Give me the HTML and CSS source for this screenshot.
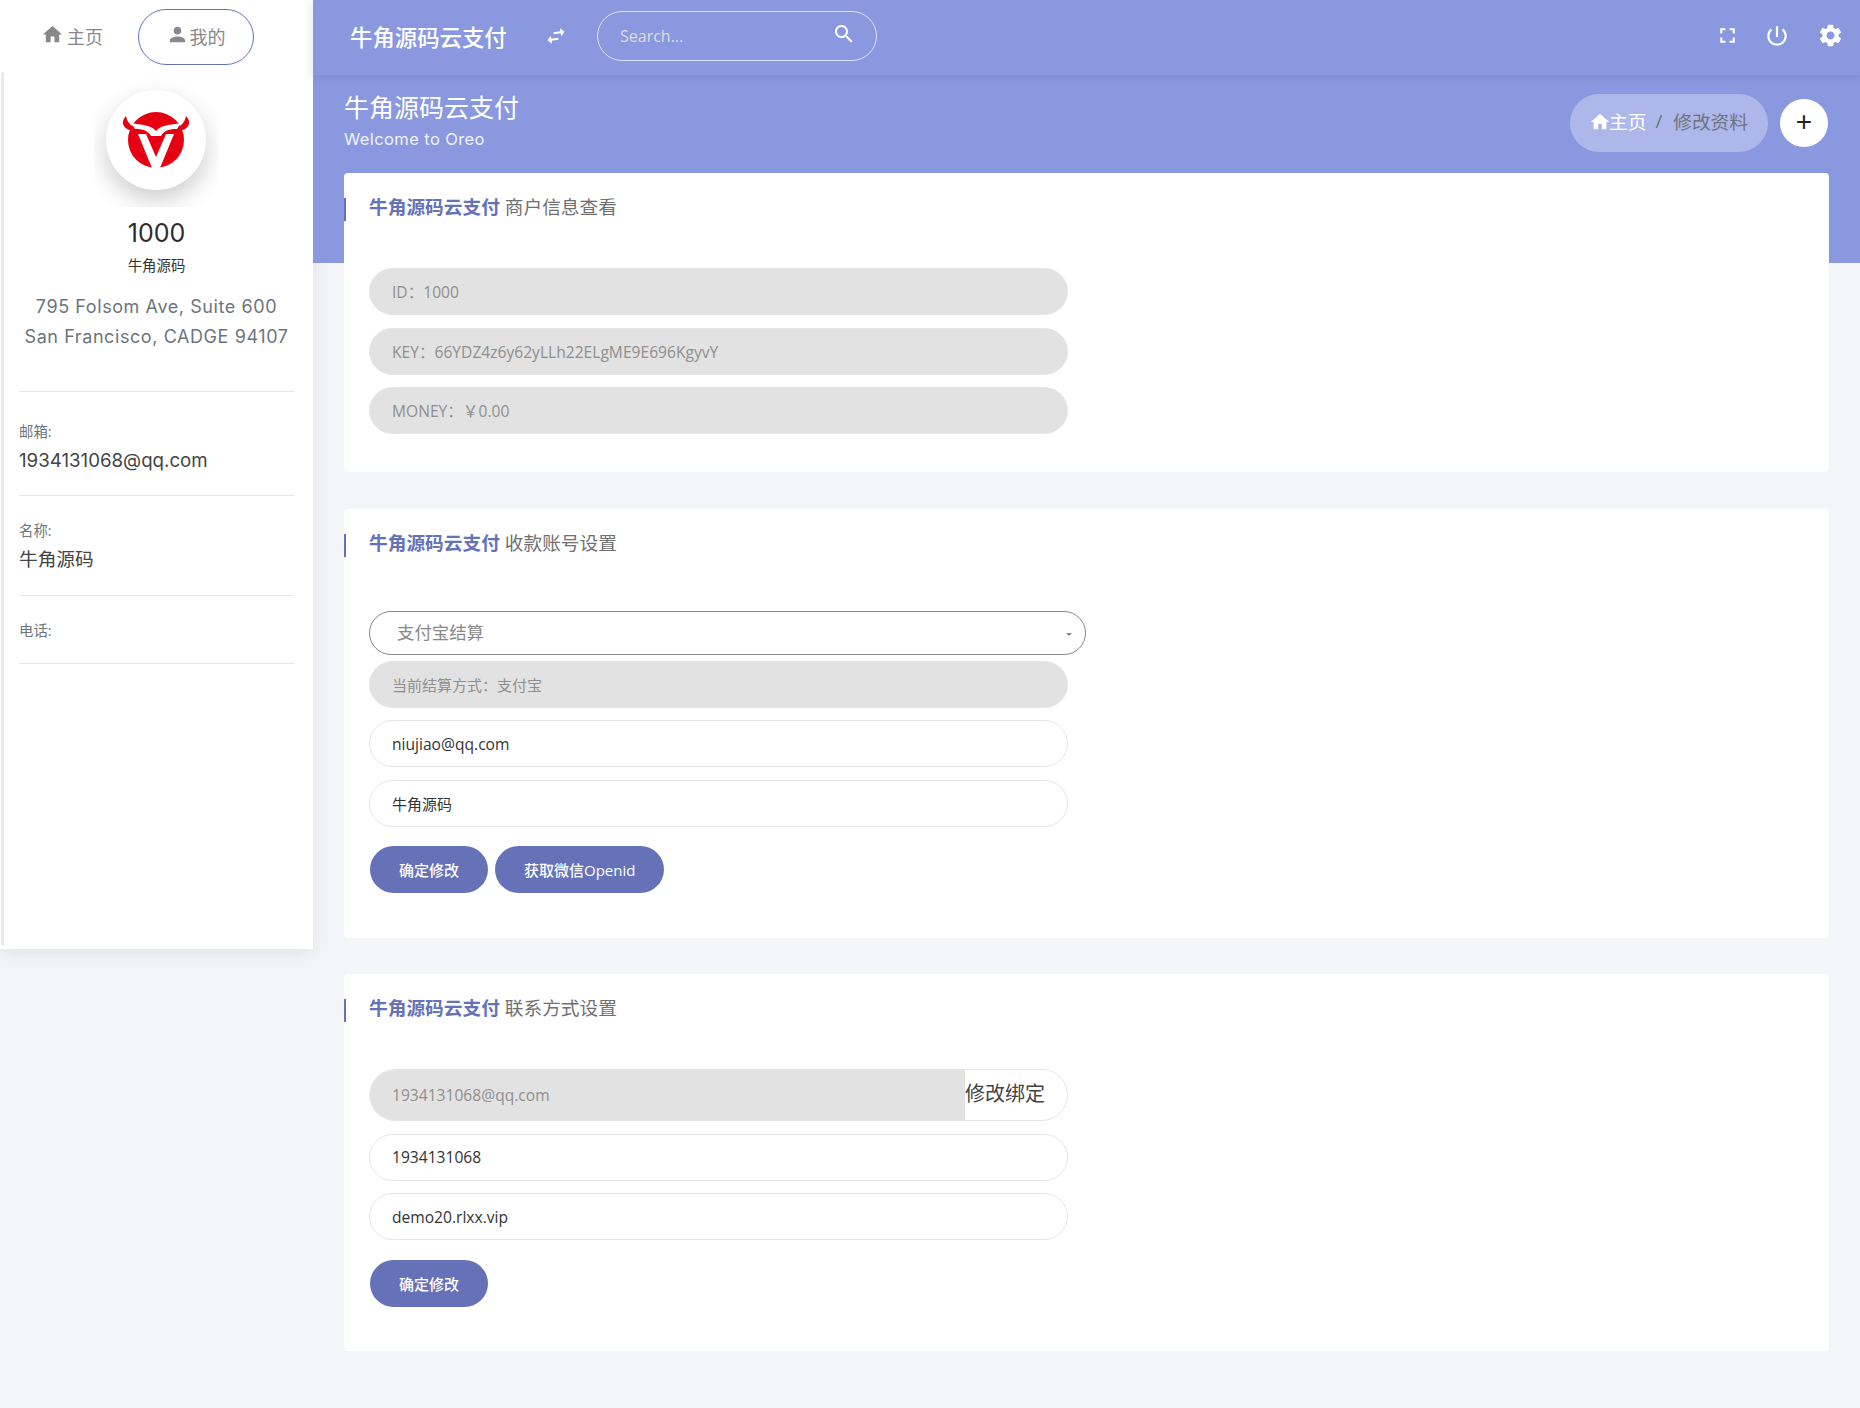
FILE: index.html
```html
<!DOCTYPE html>
<html lang="zh-CN">
<head>
  <meta charset="UTF-8" />
  <title>牛角源码云支付</title>
  <link rel="stylesheet" href="styles.css">
</head>
<body>
  <aside class="sidebar">
    <nav class="tabs">
      <a class="tab">
        <svg class="tab-icon" viewBox="0 0 24 24"><path d="M10 20v-6h4v6h5v-8h3L12 3 2 12h3v8z"/></svg>主页
      </a>
      <a class="tab active">
        <svg class="tab-icon" viewBox="0 0 24 24"><path d="M12 12c2.21 0 4-1.79 4-4s-1.79-4-4-4-4 1.79-4 4 1.79 4 4 4zm0 2c-2.67 0-8 1.34-8 4v2h16v-2c0-2.66-5.33-4-8-4z"/></svg>我的
      </a>
    </nav>
    <div class="profile">
      <div class="avatar-box">
        <div class="avatar">
          <svg viewBox="0 0 100 100" width="100" height="100">
            <circle cx="50" cy="50" r="28" fill="#e60012"/>
            <path d="M20 26C15 31 16 37 23 40L31 39C25 36 21 32 20 26Z" fill="#e60012"/>
            <path d="M80 26C85 31 84 37 77 40L69 39C75 36 79 32 80 26Z" fill="#e60012"/>
            <path d="M25 33C36 35 45 35 50 41C55 35 64 35 75 33L71 39C64 39 58 40 55 46L45 46C42 40 36 39 29 39Z" fill="#fff"/>
            <path d="M32 44H40L50 67L60 44H68L54 78H46Z" fill="#fff"/>
          </svg>
        </div>
      </div>
      <div class="profile-id">1000</div>
      <div class="profile-name">牛角源码</div>
      <p class="address">795 Folsom Ave, Suite 600<br>San Francisco, CADGE 94107</p>
      <div class="info-row first">
        <small>邮箱:</small>
        <p>1934131068@qq.com</p>
      </div>
      <div class="info-row">
        <small>名称:</small>
        <p>牛角源码</p>
      </div>
      <div class="info-row">
        <small>电话:</small>
        <p></p>
      </div>
    </div>
  </aside>

  <div class="main">
    <header class="topbar">
      <div class="brand">牛角源码云支付</div>
      <svg class="swap" viewBox="0 0 24 24"><path d="M6.99 11L3 15l3.99 4v-3H14v-2H6.99v-3zM21 9l-3.99-4v3H10v2h7.01v3L21 9z"/></svg>
      <div class="search">
        <input type="text" placeholder="Search...">
        <svg viewBox="0 0 24 24"><path d="M15.5 14h-.79l-.28-.27C15.41 12.59 16 11.11 16 9.5 16 5.91 13.09 3 9.5 3S3 5.91 3 9.5 5.91 16 9.5 16c1.61 0 3.09-.59 4.23-1.57l.27.28v.79l5 4.99L20.49 19l-4.99-5zm-6 0C7.01 14 5 11.99 5 9.5S7.01 5 9.5 5 14 7.01 14 9.5 11.99 14 9.5 14z"/></svg>
      </div>
      <div class="top-icons">
        <svg class="icon-full" viewBox="0 0 24 24"><path d="M7 14H5v5h5v-2H7v-3zm-2-4h2V7h3V5H5v5zm12 7h-3v2h5v-5h-2v3zM14 5v2h3v3h2V5h-5z"/></svg>
        <svg class="icon-power" viewBox="0 0 24 24"><path d="M13 3h-2v10h2V3zm4.83 2.17l-1.42 1.42C17.99 7.86 19 9.81 19 12c0 3.87-3.13 7-7 7s-7-3.13-7-7c0-2.19 1.01-4.14 2.58-5.42L6.17 5.17C4.23 6.82 3 9.26 3 12c0 4.97 4.03 9 9 9s9-4.03 9-9c0-2.74-1.23-5.18-3.17-6.83z"/></svg>
        <svg class="icon-gear" viewBox="0 0 24 24"><path d="M19.14 12.94c.04-.3.06-.61.06-.94 0-.32-.02-.64-.07-.94l2.03-1.58a.49.49 0 0 0 .12-.61l-1.92-3.32a.488.488 0 0 0-.59-.22l-2.39.96c-.5-.38-1.03-.7-1.62-.94l-.36-2.54a.484.484 0 0 0-.48-.41h-3.84c-.24 0-.43.17-.47.41l-.36 2.54c-.59.24-1.13.57-1.62.94l-2.39-.96c-.22-.08-.47 0-.59.22L2.74 8.87c-.12.21-.08.47.12.61l2.03 1.58c-.05.3-.09.63-.09.94s.02.64.07.94l-2.03 1.58a.49.49 0 0 0-.12.61l1.92 3.32c.12.22.37.29.59.22l2.39-.96c.5.38 1.03.7 1.62.94l.36 2.54c.05.24.24.41.48.41h3.84c.24 0 .44-.17.47-.41l.36-2.54c.59-.24 1.13-.56 1.62-.94l2.39.96c.22.08.47 0 .59-.22l1.92-3.32c.12-.22.07-.47-.12-.61l-2.01-1.58zM12 15.6c-1.98 0-3.6-1.62-3.6-3.6s1.62-3.6 3.6-3.6 3.6 1.62 3.6 3.6-1.62 3.6-3.6 3.6z"/></svg>
      </div>
    </header>

    <section class="hero">
      <div class="hero-title">
        <h1>牛角源码云支付</h1>
        <span>Welcome to Oreo</span>
      </div>
      <div class="hero-actions">
        <div class="crumbs">
          <a class="crumb-home"><svg viewBox="0 0 24 24"><path d="M10 20v-6h4v6h5v-8h3L12 3 2 12h3v8z"/></svg>主页</a>
          <span class="crumb-sep">/</span>
          <span>修改资料</span>
        </div>
        <button class="add-btn">+</button>
      </div>
    </section>

    <div class="content">
      <section class="card card-short">
        <h2 class="card-title"><span><strong>牛角源码云支付</strong> 商户信息查看</span></h2>
        <div class="form">
          <input class="field" type="text" value="ID：1000" disabled>
          <input class="field" type="text" value="KEY：66YDZ4z6y62yLLh22ELgME9E696KgyvY" disabled>
          <input class="field" type="text" value="MONEY：￥0.00" disabled>
        </div>
      </section>

      <section class="card">
        <h2 class="card-title"><span><strong>牛角源码云支付</strong> 收款账号设置</span></h2>
        <div class="form">
          <div class="select-wrap">
            <select>
              <option>支付宝结算</option>
            </select>
          </div>
          <input class="field cn" type="text" value="当前结算方式：支付宝" disabled>
          <input class="field" type="text" value="niujiao@qq.com">
          <input class="field cn" type="text" value="牛角源码">
          <div class="btn-row">
            <button class="btn">确定修改</button>
            <button class="btn">获取微信Openid</button>
          </div>
        </div>
      </section>

      <section class="card">
        <h2 class="card-title"><span><strong>牛角源码云支付</strong> 联系方式设置</span></h2>
        <div class="form">
          <div class="input-group">
            <input type="text" value="1934131068@qq.com" disabled>
            <span class="append">修改绑定</span>
          </div>
          <input class="field" type="text" value="1934131068">
          <input class="field" type="text" value="demo20.rlxx.vip">
          <div class="btn-row">
            <button class="btn">确定修改</button>
          </div>
        </div>
      </section>
    </div>
  </div>
</body>
</html>
```

FILE: styles.css
```css
* {
  box-sizing: border-box;
}
body {
  margin: 0;
  min-height: 1408px;
  display: flex;
  align-items: flex-start;
  background: #f4f5f9;
  font-family: "Open Sans", "Noto Sans CJK SC", sans-serif;
  color: #333;
}
h1, h2, p {
  margin: 0;
  font-weight: normal;
}
svg {
  fill: currentColor;
  display: block;
  flex-shrink: 0;
}

/* sidebar */
.sidebar {
  width: 313px;
  height: 949px;
  flex-shrink: 0;
  display: flex;
  flex-direction: column;
  background: #fff;
  box-shadow: 0 5px 18px rgba(0,0,0,0.08);
}
.tabs {
  height: 72px;
  padding: 9px 0 0 41px;
  display: flex;
  gap: 34.5px;
  align-items: flex-start;
}
.tab {
  height: 56px;
  display: flex;
  align-items: center;
  padding-bottom: 2px;
  font-size: 18px;
  color: #888;
}
.tab-icon {
  width: 23px;
  height: 23px;
  margin-right: 3px;
  margin-top: -3px;
}
.tab.active {
  width: 116px;
  justify-content: center;
  border: 1px solid #6572b8;
  border-radius: 28px;
}
.tab.active .tab-icon {
  margin-right: 1px;
}
.profile {
  flex: 1;
  margin: 0 0 3px 1px;
  padding: 0 19px 0 15px;
  border-left: 3px solid #e9e9e9;
  border-radius: 3px;
  text-align: center;
}
.avatar-box {
  width: 125px;
  height: 135px;
  margin: 0 auto;
  padding-top: 18px;
  overflow: hidden;
}
.avatar {
  width: 100px;
  height: 100px;
  margin-left: 12px;
  border-radius: 50%;
  background: #fff;
  box-shadow: 0 10px 25px rgba(0,0,0,0.2);
}
.profile-id {
  margin-top: 10px;
  font-family: Inter, sans-serif;
  font-size: 25px;
  line-height: 32px;
  color: #2d2d2d;
}
.profile-name {
  margin-top: 6px;
  font-size: 14.4px;
  line-height: 22px;
  color: #333;
}
.address {
  margin-top: 15px;
  padding-bottom: 39px;
  font-family: Inter, sans-serif;
  font-size: 18px;
  letter-spacing: 0.58px;
  line-height: 30px;
  color: #6c757d;
  white-space: nowrap;
}
.info-row {
  border-top: 1px solid #e6e6e6;
  text-align: left;
  padding-top: 24px;
  height: 100px;
}
.info-row:last-child {
  height: 69px;
  border-bottom: 1px solid #e6e6e6;
}
.info-row.first {
  height: 104px;
  padding-top: 29px;
}
.info-row small {
  display: block;
  font-size: 14.4px;
  line-height: 22px;
  color: #6c757d;
}
.info-row p {
  margin-top: 4px;
  font-family: Inter, "Noto Sans CJK SC", sans-serif;
  font-size: 18.7px;
  line-height: 28px;
  color: #444;
}

/* top bar */
.main {
  flex: 1;
  min-width: 0;
}
.topbar {
  height: 75px;
  padding-left: 37px;
  display: flex;
  align-items: center;
  background: #8a98e0;
  color: #fff;
  box-shadow: 0 2px 10px rgba(0,0,0,0.1);
  position: relative;
}
.brand {
  font-size: 22.4px;
  font-weight: 500;
  width: 194px;
  margin-bottom: 2px;
}
.swap {
  width: 24px;
  height: 24px;
  margin-bottom: 3px;
  transform: rotate(-8deg);
}
.search {
  width: 280px;
  height: 50px;
  margin: 0 0 4px 29px;
  padding: 0 20px 0 22px;
  display: flex;
  align-items: center;
  border: 1px solid rgba(255,255,255,0.7);
  border-radius: 25px;
}
.search input {
  flex: 1;
  min-width: 0;
  border: 0;
  outline: 0;
  padding: 0;
  background: transparent;
  font: 16px "Open Sans", sans-serif;
  color: #fff;
}
.search input::placeholder {
  color: #dcdcdc;
  opacity: 1;
}
.search svg {
  width: 24px;
  height: 24px;
  margin-top: -3px;
}
.top-icons {
  margin: 0 0 4px auto;
  padding-right: 16px;
  display: flex;
  align-items: center;
}
.icon-full {
  width: 25px;
  height: 25px;
  margin-right: 24px;
}
.icon-power {
  width: 26px;
  height: 26px;
  margin-right: 27px;
}
.icon-gear {
  width: 27px;
  height: 27px;
}

/* hero band */
.hero {
  height: 188px;
  padding: 16px 31px 0;
  display: flex;
  justify-content: space-between;
  align-items: flex-start;
  background: #8a98e0;
  color: #fff;
}
.hero-title h1 {
  font-size: 25px;
  line-height: 32px;
}
.hero-title span {
  display: block;
  margin-top: 5px;
  font-family: Inter, sans-serif;
  font-size: 16.5px;
  letter-spacing: 0.4px;
  line-height: 22px;
  color: #f0f1fb;
}
.hero-actions {
  display: flex;
  align-items: center;
  gap: 12px;
  margin-right: 1px;
  padding-top: 3px;
}
.crumbs {
  width: 198px;
  height: 58px;
  padding: 0 0 6px 20px;
  display: flex;
  align-items: center;
  border-radius: 29px;
  background: #aeb7ea;
  font-size: 18.7px;
  color: #6c757d;
}
.crumb-home {
  display: flex;
  align-items: center;
  color: #fff;
}
.crumb-home svg {
  width: 22px;
  height: 22px;
  margin: 3px -2px 0 -1px;
}
.crumb-sep {
  margin: 0 11px 0 9px;
}
.add-btn {
  width: 48px;
  height: 48px;
  padding: 0 0 3px;
  border: 0;
  border-radius: 50%;
  background: #fff;
  font: 28px "Liberation Sans", sans-serif;
  color: #222;
}

/* cards */
.content {
  margin-top: -90px;
  padding: 0 31px;
}
.card {
  margin-bottom: 36.5px;
  padding: 0 25px 44.5px;
  background: #fff;
  border-radius: 4px;
}
.card-short {
  padding-bottom: 25.5px;
}
.card-title {
  display: flex;
  height: 95px;
  margin-left: -25px;
  padding-top: 25px;
  font-size: 18.72px;
  line-height: 17px;
  color: #707070;
}
.card-title::before {
  content: "";
  width: 2px;
  height: 23px;
  margin-right: 23px;
  background: #6572b8;
}
.card-title strong {
  color: #6572b8;
  font-weight: 700;
}
.form {
  width: 699px;
}
.field {
  display: block;
  width: 100%;
  height: 47px;
  margin-bottom: 12.5px;
  padding: 0 22px;
  border: 1px solid #e5e5e5;
  border-radius: 24px;
  outline: 0;
  background: #fff;
  font: 15.6px "Open Sans", "Noto Sans CJK SC", sans-serif;
  color: #333;
}
.field.cn {
  font-size: 15px;
}
.field:disabled {
  background: #e2e2e2;
  color: #8f8f8f;
  -webkit-text-fill-color: #8f8f8f;
  opacity: 1;
}
.select-wrap {
  position: relative;
  width: 717px;
  margin: 7px 0 6px;
}
.select-wrap::after {
  content: "";
  position: absolute;
  right: 14px;
  top: 22px;
  border: 3px solid transparent;
  border-top-color: #888;
  border-bottom: 0;
}
.select-wrap select {
  display: block;
  width: 100%;
  height: 44px;
  padding: 0 27px 2px;
  appearance: none;
  border: 1px solid #888;
  border-radius: 22px;
  outline: 0;
  background: #fff;
  font: 17.4px "Open Sans", "Noto Sans CJK SC", sans-serif;
  color: #888;
}
.input-group {
  display: flex;
  height: 52px;
  margin-bottom: 12.5px;
  border: 1px solid #e5e5e5;
  border-radius: 26px;
  overflow: hidden;
}
.input-group input {
  width: 595px;
  height: 100%;
  padding: 0 22px;
  border: 0;
  outline: 0;
  background: #e2e2e2;
  font: 15.6px "Open Sans", "Noto Sans CJK SC", sans-serif;
  color: #8f8f8f;
  -webkit-text-fill-color: #8f8f8f;
  opacity: 1;
}
.append {
  flex: 1;
  line-height: 48px;
  font-size: 20px;
  color: #444;
}
.btn-row {
  display: flex;
  gap: 7px;
  margin-left: 1px;
  padding-top: 7px;
}
.btn {
  height: 47px;
  padding: 0 29px;
  border: 0;
  border-radius: 24px;
  background: #6572b8;
  font: 500 15px "Open Sans", "Noto Sans CJK SC", sans-serif;
  color: #fff;
}
```
